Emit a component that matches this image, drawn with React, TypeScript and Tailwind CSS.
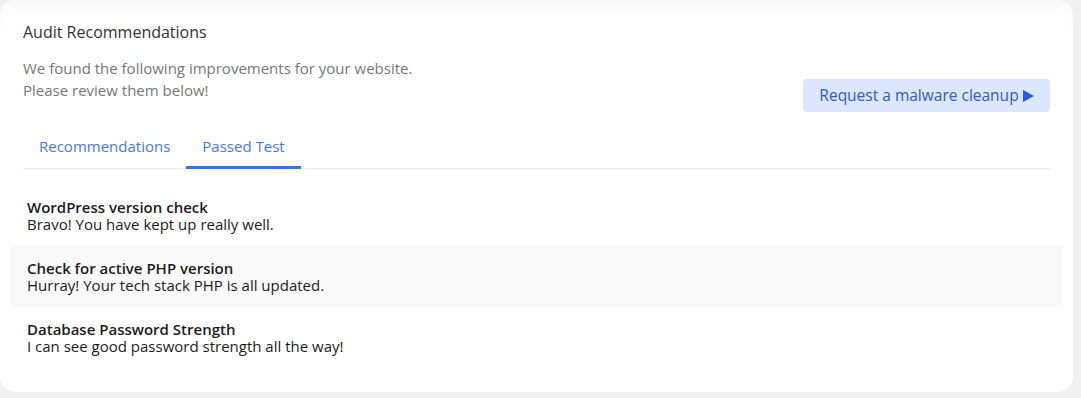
import React from 'react';

const passed = [
  { title: 'WordPress version check', text: 'Bravo! You have kept up really well.' },
  { title: 'Check for active PHP version', text: 'Hurray! Your tech stack PHP is all updated.' },
  { title: 'Database Password Strength', text: 'I can see good password strength all the way!' },
];

const App: React.FC = () => {
  return (
    <div className="w-[1081px] h-[398px] bg-[#f0f0f0] overflow-hidden" style={{ fontFamily: '"Open Sans", "Noto Sans", sans-serif' }}>
      <div className="w-[1073px] h-[392px] bg-white rounded-[15px] shadow-[inset_0_14px_20px_-12px_rgba(0,0,0,0.04)]">
        {/* Header */}
        <div className="px-[23px] pt-[22px] flex justify-between items-start">
          <div>
            <h2 className="text-[16px] leading-[20px] text-[#333]">Audit Recommendations</h2>
            <p className="mt-[15px] text-[15px] leading-[22px] text-[#777]">
              We found the following improvements for your website.
              <br />
              Please review them below!
            </p>
          </div>
          <button className="mt-[57px] h-[33px] w-[247px] rounded bg-[#dbe7fd] text-[#3358d4] text-[15.5px] flex items-center justify-center gap-1">
            Request a malware cleanup
            <svg width="11" height="12" viewBox="0 0 11 12" className="mt-px">
              <path d="M0 0 L11 6 L0 12 Z" fill="#1f5fe6" />
            </svg>
          </button>
        </div>

        {/* Tabs */}
        <div className="mx-[23px] mt-[15px] flex border-b border-[#eeeeee] text-[15px] text-[#4676ee]">
          <div className="px-4 pt-[8px] pb-[10px]">Recommendations</div>
          <div className="px-4 pt-[8px] pb-[7px] border-b-[3px] border-[#3574ee] -mb-px">Passed Test</div>
        </div>

        {/* Passed list */}
        <div className="mx-[11px] mt-[16px]">
          {passed.map((item, i) => (
            <div key={item.title} className={`px-4 pt-[14px] pb-[13px] ${i % 2 === 1 ? 'bg-[#f9f9f9]' : ''}`}>
              <div className="text-[15px] leading-[17px] font-semibold text-[#1c1c1c]">{item.title}</div>
              <div className="text-[15px] leading-[17px] text-[#1c1c1c]">{item.text}</div>
            </div>
          ))}
        </div>
      </div>
    </div>
  );
};

export default App;
